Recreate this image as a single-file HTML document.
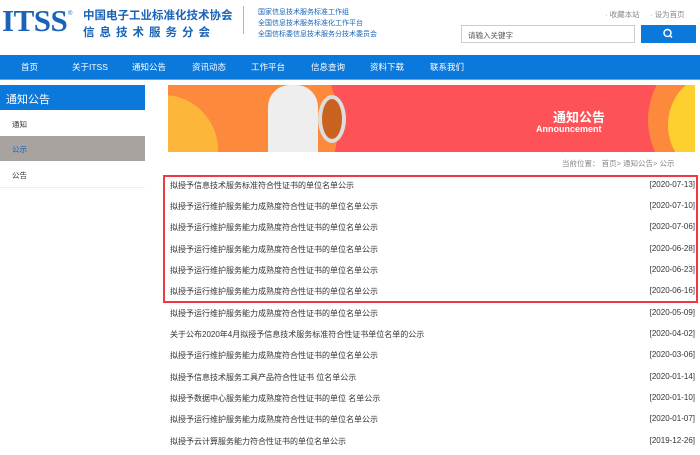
<!DOCTYPE html>
<html><head><meta charset="utf-8"><style>
*{margin:0;padding:0;box-sizing:border-box}
body{width:700px;height:455px;overflow:hidden;background:#fff;font-family:"Liberation Sans","Noto Sans CJK SC",sans-serif;position:relative}
.a{position:absolute;white-space:nowrap}
.nav{position:absolute;left:0;top:55px;width:700px;height:25px;background:#0b78dc;border-bottom:1px solid #5aa8ee}
.nav span{position:absolute;top:6px;color:#fff;font-size:8.5px}
.row{position:absolute;left:170px;width:525px;font-size:8px;color:#333;height:12px}
.row b{font-weight:normal;position:absolute;right:0;top:0}
</style></head><body>
<div class="a" style="left:2px;top:3px;font-family:'Liberation Serif',serif;font-weight:bold;font-size:31px;color:#1a64b8;letter-spacing:-0.5px">ITSS</div>
<div class="a" style="left:68px;top:11px;font-size:6px;color:#1a64b8">®</div>
<div class="a" style="left:83px;top:7px;font-size:11.5px;font-weight:bold;color:#1a64b8">中国电子工业标准化技术协会</div>
<div class="a" style="left:83px;top:24px;font-size:11.5px;font-weight:bold;color:#1a64b8;letter-spacing:5px">信息技术服务分会</div>
<div class="a" style="left:243px;top:6px;width:1px;height:28px;background:#9bbde0"></div>
<div class="a" style="left:258px;top:7px;font-size:7px;line-height:11px;color:#1a64b8">国家信息技术服务标准工作组<br>全国信息技术服务标准化工作平台<br>全国信标委信息技术服务分技术委员会</div>
<div class="a" style="left:605px;top:9px;font-size:7.5px;color:#888">· 收藏本站 &nbsp; &nbsp; · 设为首页</div>
<div class="a" style="left:461px;top:25px;width:174px;height:18px;border:1px solid #ccc;font-size:7.5px;color:#555;padding:4px 6px">请输入关键字</div>
<div class="a" style="left:641px;top:25px;width:55px;height:18px;background:#0b78dc">
<svg width="55" height="18"><circle cx="26.5" cy="8" r="3.5" stroke="#fff" stroke-width="1.5" fill="none"/><line x1="29" y1="10.5" x2="31" y2="12.5" stroke="#fff" stroke-width="1.5"/></svg></div>
<div class="nav"><span style="left:21px">首页</span><span style="left:72px">关于ITSS</span><span style="left:132px">通知公告</span><span style="left:192px">资讯动态</span><span style="left:251px">工作平台</span><span style="left:311px">信息查询</span><span style="left:370px">资料下载</span><span style="left:430px">联系我们</span></div>
<div class="a" style="left:0;top:85px;width:145px;height:25px;background:#0b78dc;color:#fff;font-size:11px;padding:6px 6px">通知公告</div>
<div class="a" style="left:12px;top:119px;font-size:7.5px;color:#333">通知</div>
<div class="a" style="left:0;top:136px;width:145px;height:25px;background:#a8a39e"></div>
<div class="a" style="left:12px;top:144px;font-size:7.5px;color:#1a64b8">公示</div>
<div class="a" style="left:12px;top:170px;font-size:7.5px;color:#333">公告</div>
<div class="a" style="left:0;top:187px;width:145px;height:1px;background:#eee"></div>
<div class="a" style="left:168px;top:85px;width:527px;height:67px;overflow:hidden;background:#fc5258">
<div class="a" style="left:-120px;top:-90px;width:290px;height:260px;border-radius:50%;background:#fd8a3c"></div>
<div class="a" style="left:-60px;top:10px;width:110px;height:110px;border-radius:50%;background:#fcb63a"></div>
<div class="a" style="left:480px;top:-30px;width:110px;height:130px;border-radius:50%;background:#fd8a3c"></div>
<div class="a" style="left:500px;top:-10px;width:90px;height:100px;border-radius:50%;background:#fdd030"></div>
<div class="a" style="left:100px;top:0;width:50px;height:67px;background:#eee;border-radius:22px 22px 0 0"></div>
<div class="a" style="left:150px;top:10px;width:28px;height:48px;background:#c8621e;border-radius:50%;border:4px solid #ddd"></div>
<div class="a" style="left:385px;top:22px;font-size:13px;font-weight:bold;color:#fff">通知公告</div>
<div class="a" style="left:368px;top:39px;font-size:9px;font-weight:bold;color:#fff">Announcement</div>
</div>
<div class="a" style="left:562px;top:158px;font-size:7.5px;color:#888">当前位置： 首页&gt; 通知公告&gt; 公示</div>
<div class="a" style="left:163px;top:175px;width:535px;height:128px;border:2px solid #ee3a40"></div>
<div class="row" style="top:180px">拟授予信息技术服务标准符合性证书的单位名单公示<b>[2020-07-13]</b></div>
<div class="row" style="top:201px">拟授予运行维护服务能力成熟度符合性证书的单位名单公示<b>[2020-07-10]</b></div>
<div class="row" style="top:222px">拟授予运行维护服务能力成熟度符合性证书的单位名单公示<b>[2020-07-06]</b></div>
<div class="row" style="top:244px">拟授予运行维护服务能力成熟度符合性证书的单位名单公示<b>[2020-06-28]</b></div>
<div class="row" style="top:265px">拟授予运行维护服务能力成熟度符合性证书的单位名单公示<b>[2020-06-23]</b></div>
<div class="row" style="top:286px">拟授予运行维护服务能力成熟度符合性证书的单位名单公示<b>[2020-06-16]</b></div>
<div class="row" style="top:308px">拟授予运行维护服务能力成熟度符合性证书的单位名单公示<b>[2020-05-09]</b></div>
<div class="row" style="top:329px">关于公布2020年4月拟授予信息技术服务标准符合性证书单位名单的公示<b>[2020-04-02]</b></div>
<div class="row" style="top:350px">拟授予运行维护服务能力成熟度符合性证书的单位名单公示<b>[2020-03-06]</b></div>
<div class="row" style="top:372px">拟授予信息技术服务工具产品符合性证书 位名单公示<b>[2020-01-14]</b></div>
<div class="row" style="top:393px">拟授予数据中心服务能力成熟度符合性证书的单位 名单公示<b>[2020-01-10]</b></div>
<div class="row" style="top:414px">拟授予运行维护服务能力成熟度符合性证书的单位名单公示<b>[2020-01-07]</b></div>
<div class="row" style="top:436px">拟授予云计算服务能力符合性证书的单位名单公示<b>[2019-12-26]</b></div>
</body></html>
